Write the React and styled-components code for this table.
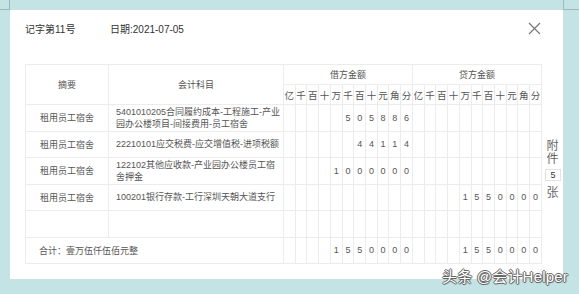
import React from "react";
import styled, { createGlobalStyle } from "styled-components";

const GlobalStyle = createGlobalStyle`
  html, body {
    margin: 0;
    padding: 0;
  }
  body {
    width: 579px;
    height: 294px;
    overflow: hidden;
    font-family: "Liberation Sans", "Noto Sans CJK SC", sans-serif;
  }
`;

const DEBIT_UNITS = ["亿", "千", "百", "十", "万", "千", "百", "十", "元", "角", "分"];

const rows = [
  { summary: "租用员工宿舍", account: ["5401010205合同履约成本-工程施工-产业", "园办公楼项目-间接费用-员工宿舍"], debit: "505886", credit: "" },
  { summary: "租用员工宿舍", account: ["22210101应交税费-应交增值税-进项税额"], debit: "44114", credit: "" },
  { summary: "租用员工宿舍", account: ["122102其他应收款-产业园办公楼员工宿", "舍押金"], debit: "1000000", credit: "" },
  { summary: "租用员工宿舍", account: ["100201银行存款-工行深圳天朝大道支行"], debit: "", credit: "1550000" },
  { summary: "", account: [], debit: "", credit: "" },
];

// pad an amount (in fen) out to the 11 digit cells, blanks on the left
const toCells = (value) => {
  const cells = Array(11).fill("");
  const chars = value.split("");
  chars.forEach((c, i) => {
    cells[11 - chars.length + i] = c;
  });
  return cells;
};

const lineColor = (index) => {
  if (index === 3 || index === 6) return "#cfe5f6";
  if (index === 9) return "#f2c9c9";
  return "#ececec";
};

const Page = styled.div`
  width: 579px;
  height: 294px;
  box-sizing: border-box;
  padding: 10px 16px 15px 10px;
  background-color: #c3e3e5;
  background-image:
    linear-gradient(#9fb8bb, #9fb8bb),
    linear-gradient(#9fb8bb, #9fb8bb),
    linear-gradient(#9fb8bb, #9fb8bb),
    linear-gradient(#9fb8bb, #9fb8bb);
  background-repeat: no-repeat;
  background-size: 1px 10px, 10px 1px, 1px 10px, 16px 1px;
  background-position: 9px 0, 0 9px, 563px 0, 563px 9px;
  position: relative;
`;

const Card = styled.div`
  height: 100%;
  box-sizing: border-box;
  background: #fff;
  padding: 9px 0 0 15px;
  display: flex;
`;

const Main = styled.div`
  width: 517px;
  display: flex;
  flex-direction: column;
`;

const Header = styled.div`
  display: flex;
  align-items: center;
  height: 18px;
  font-size: 10px;
  color: #333;
`;

const VoucherNo = styled.span`
  width: 85px;
`;

const DateText = styled.span`
  flex: 1;
`;

const CloseButton = styled.div`
  width: 13px;
  height: 13px;
  margin-right: 1px;
  cursor: pointer;
`;

const Table = styled.table`
  margin-top: 27px;
  width: 517px;
  border-collapse: collapse;
  table-layout: fixed;
  font-size: 9px;
  color: #555;

  td {
    border: 1px solid #ececec;
    padding: 0;
  }
`;

const HeadCell = styled.td`
  height: 19px;
  text-align: center;
`;

const UnitCell = styled.td`
  height: 19px;
  text-align: center;
  font-size: 9.5px;
  && {
    border-left-color: ${(p) => p.$line};
  }
`;

const Row = styled.tr`
  height: 26.5px;
`;

const SummaryCell = styled.td`
  text-align: center;
`;

const AccountCell = styled.td`
  padding: 0 0 0 7px !important;
  line-height: 12px;
`;

const DigitCell = styled.td`
  text-align: center;
  && {
    border-left-color: ${(p) => p.$line};
  }
`;

const TotalLabel = styled.td`
  padding-left: 13px !important;
`;

const Side = styled.div`
  width: 21px;
  display: flex;
  flex-direction: column;
  align-items: center;
  padding-top: 121px;
  font-size: 12px;
  color: #666;
  line-height: 13px;
`;

const CountBox = styled.div`
  width: 14px;
  height: 10px;
  margin: 3px 0 6px 1px;
  border: 1px solid #e3e3e3;
  font-size: 9px;
  line-height: 10px;
  text-align: center;
  color: #333;
`;

const Watermark = styled.div`
  position: absolute;
  right: 11px;
  bottom: 8px;
  font-size: 15px;
  color: #fff;
  letter-spacing: 0.2px;
  text-shadow:
    1px 0 0 #666, -1px 0 0 #666, 0 1px 0 #666, 0 -1px 0 #666,
    1px 1px 1px rgba(0, 0, 0, 0.3);
`;

const DigitCells = ({ value }) =>
  toCells(value).map((c, i) => (
    <DigitCell key={i} $line={lineColor(i)}>
      {c}
    </DigitCell>
  ));

const App = () => {
  return (
    <Page>
      <GlobalStyle />
      <Card>
        <Main>
          <Header>
            <VoucherNo>记字第11号</VoucherNo>
            <DateText>日期:2021-07-05</DateText>
            <CloseButton>
              <svg width="13" height="13" viewBox="0 0 13 13">
                <path d="M1 1 L12 12 M12 1 L1 12" stroke="#777" strokeWidth="1.2" />
              </svg>
            </CloseButton>
          </Header>
          <Table>
            <colgroup>
              <col style={{ width: 83 }} />
              <col style={{ width: 175 }} />
            </colgroup>
            <tbody>
              <tr>
                <HeadCell rowSpan={2}>摘要</HeadCell>
                <HeadCell rowSpan={2}>会计科目</HeadCell>
                <HeadCell colSpan={11}>借方金额</HeadCell>
                <HeadCell colSpan={11}>贷方金额</HeadCell>
              </tr>
              <tr>
                {[...DEBIT_UNITS, ...DEBIT_UNITS].map((u, i) => (
                  <UnitCell key={i} $line={lineColor(i % 11)}>
                    {u}
                  </UnitCell>
                ))}
              </tr>
              {rows.map((r, i) => (
                <Row key={i}>
                  <SummaryCell>{r.summary}</SummaryCell>
                  <AccountCell>
                    {r.account.map((line, j) => (
                      <div key={j}>{line}</div>
                    ))}
                  </AccountCell>
                  <DigitCells value={r.debit} />
                  <DigitCells value={r.credit} />
                </Row>
              ))}
              <Row>
                <TotalLabel colSpan={2}>合计：壹万伍仟伍佰元整</TotalLabel>
                <DigitCells value="1550000" />
                <DigitCells value="1550000" />
              </Row>
            </tbody>
          </Table>
        </Main>
        <Side>
          <span>附</span>
          <span>件</span>
          <CountBox>5</CountBox>
          <span>张</span>
        </Side>
      </Card>
      <Watermark>头条 @会计Helper</Watermark>
    </Page>
  );
};

export default App;
